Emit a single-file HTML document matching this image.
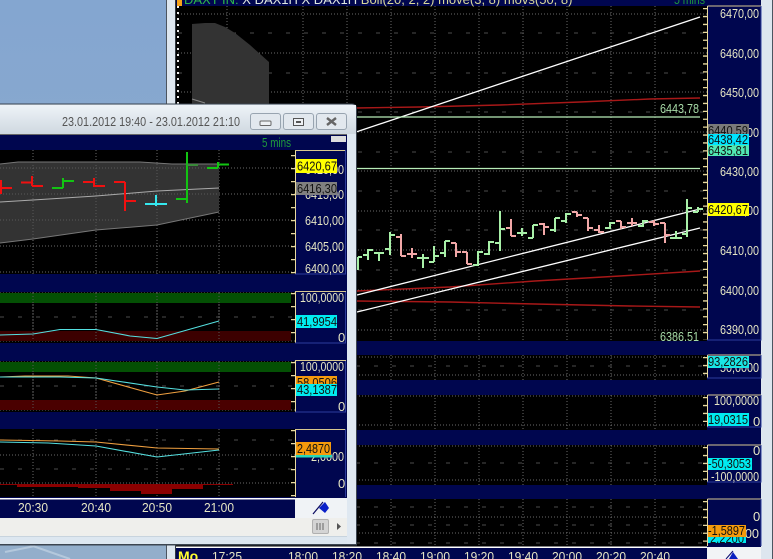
<!DOCTYPE html>
<html><head><meta charset="utf-8"><style>
html,body{margin:0;padding:0;background:#8aa9cd;width:773px;height:559px;overflow:hidden}
svg{display:block;font-family:"Liberation Sans",sans-serif;font-size:13px}
.g{stroke:#6a6a6a;stroke-width:1;stroke-dasharray:1 2;fill:none}
.o{stroke:#585858;stroke-width:1;stroke-dasharray:1 2;fill:none}
.d{stroke:#4c4c4c;stroke-width:1;stroke-dasharray:4 14;fill:none}
.l{fill:#e6e6c4}
.k{fill:#111}
</style></head><body>
<svg width="773" height="559" viewBox="0 0 773 559" xmlns="http://www.w3.org/2000/svg">
<defs>
<linearGradient id="bg" x1="0" y1="0" x2="0" y2="1"><stop offset="0" stop-color="#84a6d0"/><stop offset="1" stop-color="#93aecb"/></linearGradient>
<linearGradient id="tt" x1="0" y1="0" x2="0" y2="1"><stop offset="0" stop-color="#eef3f8"/><stop offset="1" stop-color="#cfd8e0"/></linearGradient>
<clipPath id="cb"><rect x="176" y="6" width="531" height="335"/></clipPath>
</defs>
<!-- desktop -->
<rect width="773" height="559" fill="url(#bg)"/>
<path d="M30 545L70 559M35 546L5 552" stroke="#b4c8dc" stroke-width="2" fill="none"/>
<!-- back window -->
<rect x="166" y="0" width="607" height="559" fill="#dde6ef"/>
<rect x="166" y="0" width="1" height="559" fill="#4c5560"/>
<rect x="772" y="0" width="1" height="559" fill="#4c5560"/>
<rect x="175" y="0" width="1" height="559" fill="#303840"/>
<rect x="176" y="0" width="585" height="559" fill="#00064f"/>
<rect x="176" y="6" width="531" height="335" fill="#000"/>
<rect x="176" y="355" width="531" height="25" fill="#000"/>
<rect x="176" y="395" width="531" height="35" fill="#000"/>
<rect x="176" y="445" width="531" height="40" fill="#000"/>
<rect x="176" y="499" width="531" height="48" fill="#000"/>
<!-- header -->
<rect x="177" y="0" width="5" height="6" fill="#f7a318"/>
<text x="184" y="4" fill="#2fb84a">DAXT IN: <tspan fill="#dfe8e0">X DAX1H X DAX1H</tspan> <tspan fill="#d8d89a">Boll(20, 2, 2) move(3, 8) movs(50, 8)</tspan></text>
<text x="674" y="4" fill="#1f9a3c" textLength="31" lengthAdjust="spacingAndGlyphs">5 mins</text>
<!-- back grid -->
<g>
<path class="g" d="M227 6V341M303 6V341M347 6V341M391 6V341M435 6V341M479 6V341M523 6V341M567 6V341M611 6V341M655 6V341"/>
<path class="g" d="M178 14H707M178 53H707M178 92H707M178 132H707M178 171H707M178 211H707M178 250H707M178 290H707M178 330H707"/>
<path class="d" d="M178 33H707M178 73H707M178 112H707M178 152H707M178 191H707M178 230H707M178 270H707M178 310H707"/>
<path class="g" d="M227 355V380M303 355V380M347 355V380M391 355V380M435 355V380M479 355V380M523 355V380M567 355V380M611 355V380M655 355V380"/>
<path class="g" d="M227 395V430M303 395V430M347 395V430M391 395V430M435 395V430M479 395V430M523 395V430M567 395V430M611 395V430M655 395V430"/>
<path class="g" d="M227 445V485M303 445V485M347 445V485M391 445V485M435 445V485M479 445V485M523 445V485M567 445V485M611 445V485M655 445V485"/>
<path class="g" d="M227 499V547M303 499V547M347 499V547M391 499V547M435 499V547M479 499V547M523 499V547M567 499V547M611 499V547M655 499V547"/>
<path class="g" d="M176 357H707M176 375H707M176 396H707M176 425H707M176 446H707M176 480H707M176 517H707M176 533H707"/>
<path class="d" d="M176 366H707M176 463H707M176 507H707M176 525H707M176 543H707"/>
</g>
<line x1="178" y1="6" x2="178" y2="110" stroke="#eee" stroke-width="2" stroke-dasharray="2 4"/>
<!-- gray area -->
<path d="M192 24L205 23L215 23L225 27L235 33L250 45L269 62V110H192Z" fill="#333"/>
<path d="M192 99L205 103" stroke="#888" fill="none"/>
<!-- back lines -->
<g clip-path="url(#cb)" fill="none">
<path d="M356 108L420 107L500 105L580 102L650 99L700 98" stroke="#a81818" stroke-width="1.400"/>
<path d="M357 291L450 287L535 281L620 276L700 271" stroke="#a81818" stroke-width="1.400"/>
<path d="M357 301L450 302L535 304L630 306L700 307" stroke="#a81818" stroke-width="1.400"/>
<path d="M356 132L700 17" stroke="#fff" stroke-width="1.300"/>
<path d="M357 295L700 209" stroke="#fff" stroke-width="1.300"/>
<path d="M357 312L700 228" stroke="#fff" stroke-width="1.300"/>
<path d="M356 117H700M356 168.500H700" stroke="#b8ecb8" stroke-width="1.200"/>
<path d="M358 257V270M358 257H362M368 249V260M363 255H368M368 250H373M379 252V261M374 253H384M390 232V255M385 249H390M390 235H395M423 254V268M417 258H429M434 246V262M429 262H434M434 256H439M445 241V257M440 253H445M445 241H450M478 251V266M473 265H478M478 252H483M489 241V255M484 254H489M489 242H494M500 211V251M495 243H500M500 229H505M522 228V236M517 233H527M533 225V238M528 238H533M533 225H538M555 218V232M550 230H555M555 218H560M566 213V223M561 221H566M566 214H571M610 222V229M605 228H610M610 223H615M643 220V227M638 226H643M643 221H648M676 231V239M670 238H682M687 199V237M682 234H687M687 208H692M698 207V212M693 212H698M698 209H703" stroke="#a8f0a8" stroke-width="2"/>
<path d="M401 234V256M396 237H401M401 256H406M412 248V258M407 254H417M456 243V257M451 243H456M456 252H461M467 252V264M462 252H467M467 264H472M511 219V236M506 228H511M511 236H516M544 223V235M539 224H544M544 227H549M577 212V217M572 212H577M577 215H582M588 218V231M583 218H588M588 228H593M599 225V233M594 230H599M599 232H604M621 221V229M616 221H621M621 227H626M632 218V226M627 223H637M654 220V226M649 222H654M654 224H659M665 223V243M660 223H665M665 235H670" stroke="#f2a8a8" stroke-width="2"/>
<text x="660" y="113" fill="#a8dca8" textLength="39" lengthAdjust="spacingAndGlyphs">6443,78</text>
<text x="660" y="341" fill="#a8dca8" textLength="39" lengthAdjust="spacingAndGlyphs">6386,51</text>
</g>
<!-- back axis -->
<g fill="none">
<path d="M707.500 6H761M707.500 355H761M707.500 395H761M707.500 445H761M707.500 499H761" stroke="#d8c890"/>
<path d="M707.500 6V340M707.500 355V378M707.500 395V427M707.500 445V482M707.500 499V546" stroke="#e8d9a0"/>
<path d="M761 6V340H707M761 355V378H707M761 395V427H707M761 445V482H707M761 499V546" stroke="#2c3c9c"/>
<path d="M705 8V340M705 357V376M705 397V426M705 447V481M705 501V546" stroke="#e8d9a0" stroke-width="4" stroke-dasharray="1.300 6.600"/>
</g>
<g class="l">
<text x="720" y="18" textLength="39" lengthAdjust="spacingAndGlyphs">6470,00</text>
<text x="720" y="58" textLength="39" lengthAdjust="spacingAndGlyphs">6460,00</text>
<text x="720" y="97" textLength="39" lengthAdjust="spacingAndGlyphs">6450,00</text>
<text x="720" y="137" textLength="39" lengthAdjust="spacingAndGlyphs">6440,00</text>
<text x="720" y="176" textLength="39" lengthAdjust="spacingAndGlyphs">6430,00</text>
<text x="720" y="215" textLength="39" lengthAdjust="spacingAndGlyphs">6420,00</text>
<text x="720" y="255" textLength="39" lengthAdjust="spacingAndGlyphs">6410,00</text>
<text x="720" y="295" textLength="39" lengthAdjust="spacingAndGlyphs">6400,00</text>
<text x="720" y="334" textLength="39" lengthAdjust="spacingAndGlyphs">6390,00</text>
<text x="720" y="372" textLength="39" lengthAdjust="spacingAndGlyphs">50,0000</text>
<text x="714" y="405" textLength="45" lengthAdjust="spacingAndGlyphs">100,0000</text>
<text x="753" y="426">0</text>
<text x="753" y="455">0</text>
<text x="711" y="481" textLength="48" lengthAdjust="spacingAndGlyphs">-100,0000</text>
<text x="753" y="521">0</text>
<text x="720" y="538" textLength="39" lengthAdjust="spacingAndGlyphs">2,0000</text>
</g>
<!-- back tags -->
<rect x="708" y="124" width="41" height="10" fill="#7a7a7a"/><text x="708" y="135" class="k" textLength="40" lengthAdjust="spacingAndGlyphs">6440,59</text>
<rect x="708" y="145" width="41" height="11" fill="#50e8b4"/><text x="708" y="155" class="k" textLength="40" lengthAdjust="spacingAndGlyphs">6435,81</text>
<rect x="708" y="134" width="41" height="11" fill="#00e4ff"/><text x="708" y="144" class="k" textLength="40" lengthAdjust="spacingAndGlyphs">6438,42</text>
<rect x="708" y="203" width="41" height="13" fill="#ffff00"/><text x="708" y="214" class="k" textLength="40" lengthAdjust="spacingAndGlyphs">6420,67</text>
<rect x="708" y="356" width="41" height="12" fill="#19e6e6"/><text x="708" y="366" class="k" textLength="40" lengthAdjust="spacingAndGlyphs">93,2826</text>
<rect x="708" y="413" width="41" height="13" fill="#00ebf0"/><text x="708" y="424" class="k" textLength="40" lengthAdjust="spacingAndGlyphs">19,0315</text>
<rect x="708" y="458" width="44" height="12" fill="#00ebf0"/><text x="708" y="468" class="k" textLength="43" lengthAdjust="spacingAndGlyphs">-50,3053</text>
<rect x="708" y="537" width="38" height="6" fill="#00e8f0"/><text x="710" y="543" class="k" textLength="34" lengthAdjust="spacingAndGlyphs">2,2200</text>
<rect x="708" y="525" width="38" height="12" fill="#f59a0c"/><text x="708" y="535" class="k" textLength="37" lengthAdjust="spacingAndGlyphs">-1,5897</text>
<!-- back time axis -->
<rect x="176" y="546.500" width="531" height="1.500" fill="#fff"/>
<rect x="707" y="547" width="54" height="12" fill="#f2f4f6"/>
<path d="M726 559L733 551" stroke="#0a0a70" fill="none"/>
<path d="M729 559L733 552L738 559Z" fill="#0c20c0"/>
<text x="178" y="561" font-weight="bold" font-size="14" fill="#ffff30">Mo</text>
<g class="l" text-anchor="middle">
<text x="227" y="561" textLength="30" lengthAdjust="spacingAndGlyphs">17:25</text><text x="303" y="561" textLength="30" lengthAdjust="spacingAndGlyphs">18:00</text><text x="347" y="561" textLength="30" lengthAdjust="spacingAndGlyphs">18:20</text><text x="391" y="561" textLength="30" lengthAdjust="spacingAndGlyphs">18:40</text><text x="435" y="561" textLength="30" lengthAdjust="spacingAndGlyphs">19:00</text><text x="479" y="561" textLength="30" lengthAdjust="spacingAndGlyphs">19:20</text><text x="523" y="561" textLength="30" lengthAdjust="spacingAndGlyphs">19:40</text><text x="567" y="561" textLength="30" lengthAdjust="spacingAndGlyphs">20:00</text><text x="611" y="561" textLength="30" lengthAdjust="spacingAndGlyphs">20:20</text><text x="655" y="561" textLength="30" lengthAdjust="spacingAndGlyphs">20:40</text>
</g>

<!-- FRONT WINDOW -->
<path d="M0 104H352Q356 104 356 108V545H0Z" fill="#dde7f0"/>
<path d="M0 104H352Q356 104 356.500 108V545H0" fill="none" stroke="#3c4550" stroke-width="1"/>
<rect x="0" y="105" width="356" height="29" fill="url(#tt)"/>
<rect x="347" y="134" width="9" height="410" fill="#dfe8f1"/>
<rect x="0" y="134" width="347" height="1" fill="#666"/>
<text x="62" y="126" fill="#555" textLength="178" lengthAdjust="spacingAndGlyphs">23.01.2012 19:40 - 23.01.2012 21:10</text>
<g fill="#e2e8ee" stroke="#98a4b0">
<rect x="250.500" y="113.500" width="30" height="16" rx="2.500"/>
<rect x="283.500" y="113.500" width="30" height="16" rx="2.500"/>
<rect x="316.500" y="113.500" width="30" height="16" rx="2.500"/>
</g>
<rect x="260" y="121" width="11" height="4.500" rx="1" fill="#eef1f4" stroke="#666" stroke-width="1"/>
<rect x="293.500" y="118.500" width="10" height="7" fill="#eef1f4" stroke="#555"/><rect x="296" y="121" width="5" height="2" fill="#555"/>
<path d="M327 118L336 125M336 118L327 125" stroke="#666" stroke-width="2.400"/>
<!-- client -->
<rect x="0" y="135" width="347" height="383" fill="#00064f"/>
<rect x="0" y="150" width="295" height="124" fill="#000"/>
<rect x="0" y="292" width="295" height="51" fill="#000"/>
<rect x="0" y="361" width="295" height="51" fill="#000"/>
<rect x="0" y="429" width="295" height="68" fill="#000"/>
<text x="262" y="147" fill="#1f9a3c" textLength="29" lengthAdjust="spacingAndGlyphs">5 mins</text>
<rect x="331" y="136" width="15" height="6" fill="#ddd"/>
<!-- front grid -->
<path class="g" d="M33 150V274M96 150V274M157 150V274M219 150V274M33 292V343M96 292V343M157 292V343M219 292V343M33 361V412M96 361V412M157 361V412M219 361V412M33 429V497M96 429V497M157 429V497M219 429V497"/>
<path class="g" d="M0 168H295M0 194H295M0 220H295M0 246H295M0 272H295M0 293H295M0 341H295M0 362H295M0 410H295M0 455H295M0 483H295"/>
<path class="d" d="M0 317H295M0 386H295M0 440H295M0 469H295"/>
<!-- front area -->
<path d="M0 164L18 162L140 162L172 164L219 164V212L157 225L96 230L33 239L0 243Z" fill="#333"/>
<path d="M0 164L18 162L140 162L172 164L219 164M0 243L33 239L96 230L157 225L219 212" fill="none" stroke="#777"/>
<path class="o" d="M33 162V240M96 162V230M157 164V225M0 168H219M0 194H219M0 220H120"/>
<path d="M0 202L33 200L96 196L157 191L219 188" fill="none" stroke="#aaa"/>
<g fill="none" stroke-width="2">
<path d="M1 180V194M1 188H12M32 176V186M21 182.500H32M32 186H43M94 178V187M83 182H94M94 186H105M125 182V211M114 182H125M125 201H136" stroke="#f01010"/>
<path d="M63 178V188M52 188H63M63 181H74M187 152V203M176 199H187M218 162V168M207 168H218M218 164.500H229" stroke="#12c412"/>
<path d="M187 165H198" stroke="#3a8a3a"/>
<path d="M156 195V206M145 204H167" stroke="#35e8ee"/>
</g>
<!-- front panes bands -->
<rect x="0" y="293" width="291" height="10" fill="#045004"/>
<rect x="0" y="331" width="291" height="10" fill="#3c0000"/>
<rect x="0" y="362" width="291" height="10" fill="#045004"/>
<rect x="0" y="400" width="291" height="10" fill="#4a0000"/>
<path class="o" d="M33 293V341M96 293V341M157 293V341M219 293V341M33 362V410M96 362V410M157 362V410M219 362V410"/>
<g fill="none" stroke-width="1.100">
<path d="M0 335L33 334L60 329.500L96 329.500L130 336L157 338.500L219 321" stroke="#55e0e0"/>
<path d="M0 377L25 376L68 376L96 378L157 395L185 391L219 382" stroke="#f0a040"/>
<path d="M0 377L60 377L96 378L157 387L185 390L219 389" stroke="#55e0e0"/>
<path d="M0 440L60 441L96 442L157 448L219 449" stroke="#f0a040"/>
<path d="M0 442L48 443L96 446L157 457L219 450" stroke="#55e0e0"/>
</g>
<path d="M0 484H233V485H203V489H172V494H141V491H110V488H78V487H17V485H0Z" fill="#8b0000"/>
<!-- front axis -->
<g fill="none">
<path d="M295.500 150V274M295.500 292V343M295.500 361V412M295.500 429V497" stroke="#e8d9a0"/>
<path d="M295 150.500H346M295 291.500H346M295 360.500H346M295 429.500H346" stroke="#d8c890"/>
<path d="M345.500 150V274H295M345.500 292V343H295M345.500 361V412H295M345.500 429V497" stroke="#2c3c9c"/>
<path d="M293 155V274M293 293V342M293 362V411M293 430V497" stroke="#e8d9a0" stroke-width="4" stroke-dasharray="1.300 11.700"/>
</g>
<g class="l">
<text x="305" y="174" textLength="39" lengthAdjust="spacingAndGlyphs">6420,00</text>
<text x="305" y="199" textLength="39" lengthAdjust="spacingAndGlyphs">6415,00</text>
<text x="305" y="225" textLength="39" lengthAdjust="spacingAndGlyphs">6410,00</text>
<text x="305" y="251" textLength="39" lengthAdjust="spacingAndGlyphs">6405,00</text>
<text x="305" y="273" textLength="39" lengthAdjust="spacingAndGlyphs">6400,00</text>
<text x="300" y="302" textLength="44" lengthAdjust="spacingAndGlyphs">100,0000</text>
<text x="338" y="342">0</text>
<text x="300" y="371" textLength="44" lengthAdjust="spacingAndGlyphs">100,0000</text>
<text x="338" y="411">0</text>
<text x="311" y="461" textLength="33" lengthAdjust="spacingAndGlyphs">2,0000</text>
<text x="338" y="488">0</text>
</g>
<rect x="296" y="159" width="41" height="14" fill="#ffff00"/><text x="297" y="170.500" class="k" textLength="40" lengthAdjust="spacingAndGlyphs">6420,67</text>
<rect x="296" y="182" width="41" height="13" fill="#808080"/><text x="297" y="193" class="k" textLength="40" lengthAdjust="spacingAndGlyphs">6416,30</text>
<rect x="296" y="315" width="41" height="13" fill="#00ebf0"/><text x="297" y="326" class="k" textLength="40" lengthAdjust="spacingAndGlyphs">41,9954</text>
<rect x="296" y="376" width="41" height="9" fill="#f59a0c"/><text x="297" y="387" class="k" textLength="40" lengthAdjust="spacingAndGlyphs">58,0506</text>
<rect x="296" y="384" width="41" height="12" fill="#00ebf0"/><text x="297" y="394" class="k" textLength="40" lengthAdjust="spacingAndGlyphs">43,1387</text>
<rect x="296" y="455" width="36" height="2.500" fill="#28d8b8"/>
<rect x="296" y="442" width="35" height="13" fill="#f59a0c"/><text x="297" y="453" class="k" textLength="33" lengthAdjust="spacingAndGlyphs">2,4870</text>
<!-- front time axis -->
<rect x="0" y="498" width="295" height="1.500" fill="#fff"/>
<g class="l" text-anchor="middle">
<text x="33" y="512" textLength="30" lengthAdjust="spacingAndGlyphs">20:30</text><text x="96" y="512" textLength="30" lengthAdjust="spacingAndGlyphs">20:40</text><text x="157" y="512" textLength="30" lengthAdjust="spacingAndGlyphs">20:50</text><text x="219" y="512" textLength="30" lengthAdjust="spacingAndGlyphs">21:00</text>
</g>
<rect x="295" y="498" width="52" height="20" fill="#f0f3f6"/>
<path d="M313 514L323 502" stroke="#0a0a60" stroke-width="1.200"/>
<path d="M319 508L325 502L329 508L325 513Z" fill="#0a20c8"/>
<!-- scrollbar -->
<rect x="0" y="518" width="347" height="18" fill="#efefec"/>
<rect x="312.500" y="519.500" width="16" height="14" rx="1.500" fill="#d4d4d4" stroke="#b0b0b0"/>
<path d="M317 523V530M320 523V530M323 523V530" stroke="#666"/>
<path d="M337 523L341 526.500L337 530Z" fill="#555"/>
<rect x="0" y="536" width="347" height="1" fill="#c8d4de"/>
<rect x="0" y="544" width="357" height="1" fill="#3c4550"/>
</svg>
</body></html>
